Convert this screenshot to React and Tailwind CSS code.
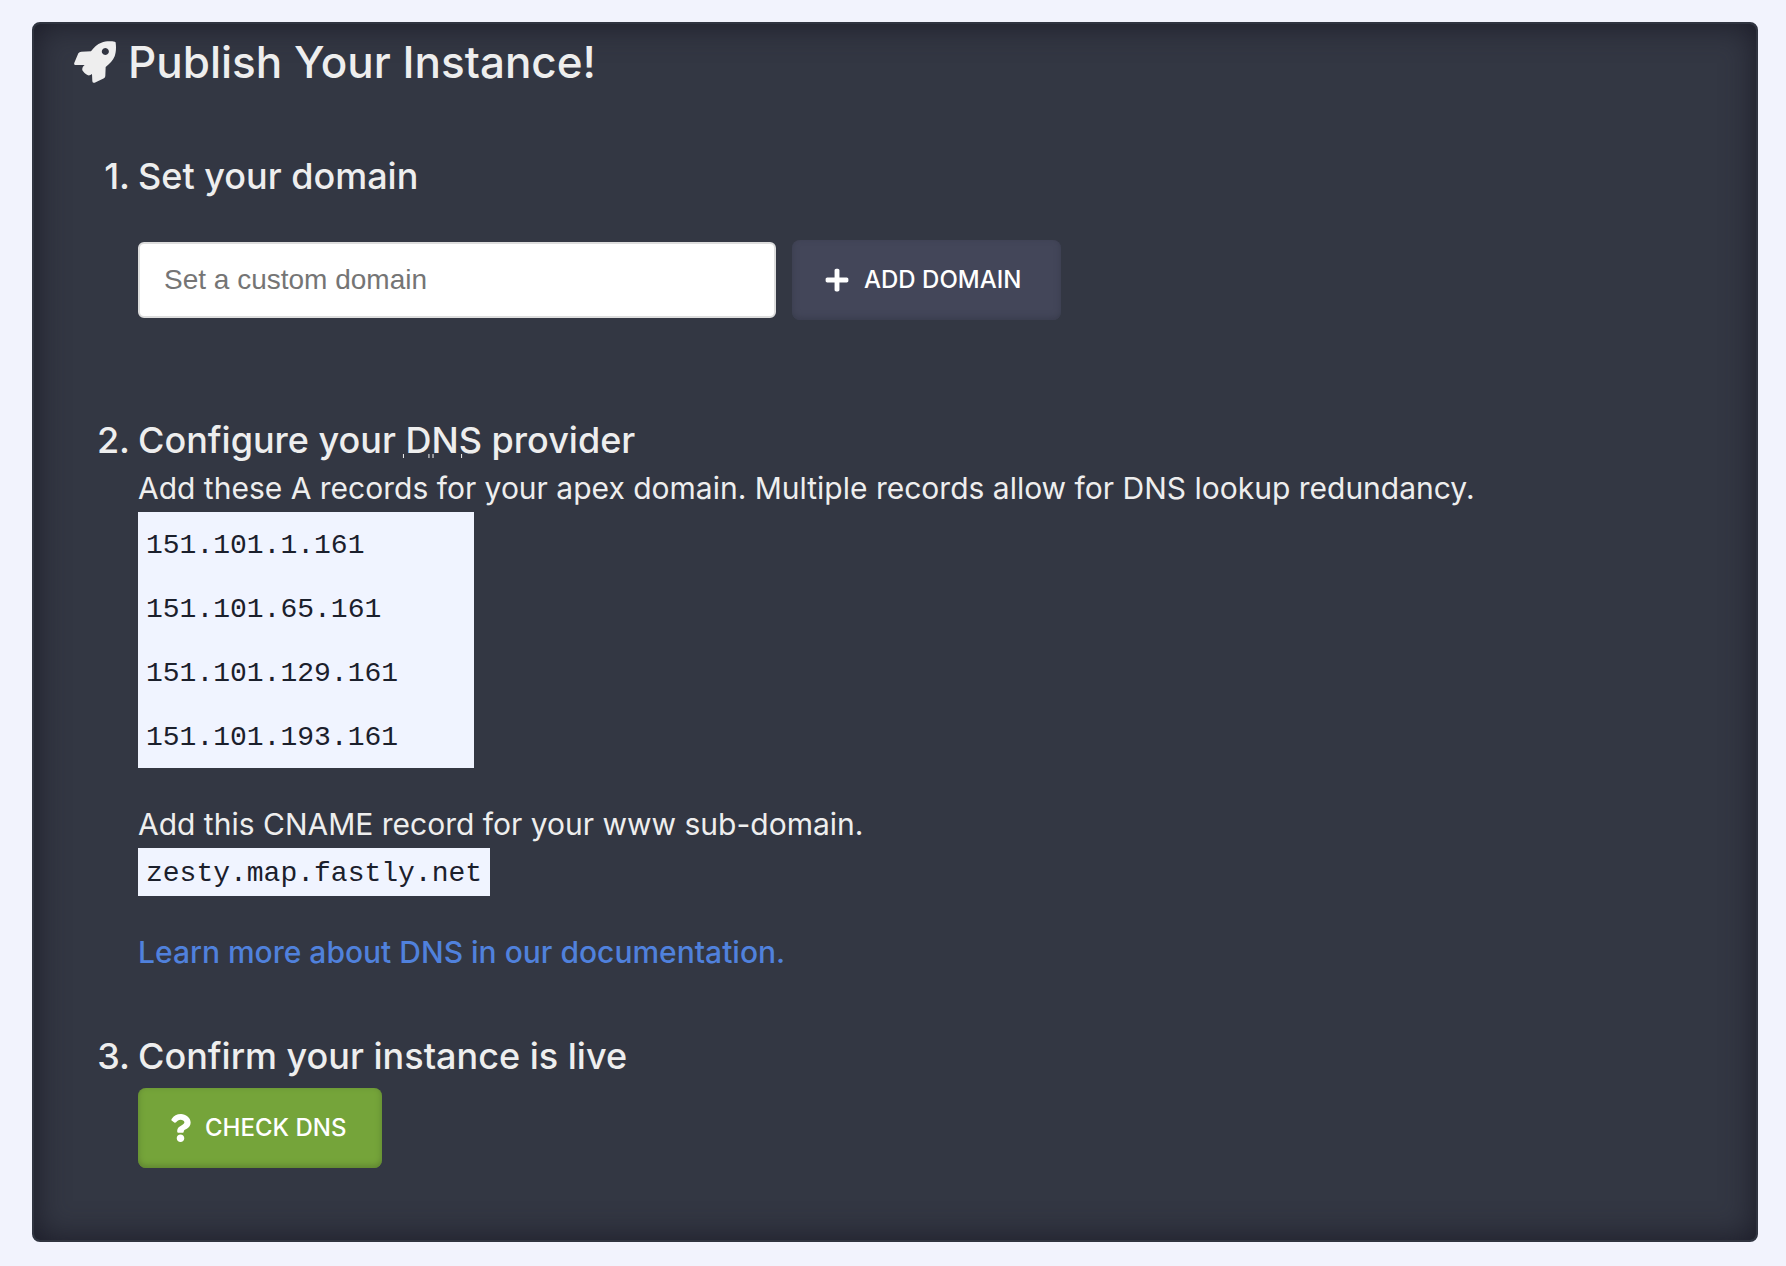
import { FaPlus, FaQuestion } from "react-icons/fa";

const aRecords = [
  "151.101.1.161",
  "151.101.65.161",
  "151.101.129.161",
  "151.101.193.161",
];

function Rocket({ className }) {
  return (
    <svg className={className} viewBox="0 0 126 126" fill="currentColor" aria-hidden="true">
      <path
        fillRule="evenodd"
        d="M122 2Q125 2 125 5C127 20 126 35 122 46C117 58 107 69 95 78L94 104Q94 109 90 112L62 125Q56 127 55 121L54 99C50 102 46 104 42 103C34 99 28 93 25 88C24 82 26 76 32 72L4 72Q-1 71 1 65L13 37Q16 32 22 32L51 31C60 19 70 9 82 5C94 0 110 0 122 2ZM94 21a10.500 10.500 0 1 0 0.010 0Z"
      />
    </svg>
  );
}

function Step({ number, title, className = "", children }) {
  return (
    <li className={`flex gap-2 ${className}`}>
      <span className="w-15 shrink-0 text-right text-[36px] leading-12 font-medium">{number}.</span>
      <div className="min-w-0 flex-1">
        <h2 className="text-[36px] leading-12 font-medium">{title}</h2>
        {children}
      </div>
    </li>
  );
}

function Action({ className, children }) {
  return (
    <button
      type="button"
      className={`flex h-20 items-center gap-[14px] rounded-lg pl-8 text-2xl font-medium whitespace-nowrap text-white uppercase ${className}`}
    >
      {children}
    </button>
  );
}

function DnsTerm() {
  return (
    <span className="relative inline-block">
      DNS
      <svg
        className="absolute bottom-0 left-0 h-3 w-full overflow-visible"
        viewBox="0 0 75 12"
        preserveAspectRatio="none"
        aria-hidden="true"
      >
        <path d="M-2.500 2v4M22.500 2v4M26.500 2v4M54.500 2v4" stroke="#eeeeee" strokeWidth="1" />
      </svg>
    </span>
  );
}

export default function App() {
  return (
    <main className="min-h-screen bg-[#f2f3fd] pt-[22px] pr-7 pb-6 pl-8 font-['Inter',sans-serif] text-[#eeeeee]">
      <section className="rounded-lg border-2 border-[#303440] bg-[#333743] px-10 pt-[10px] pb-18 shadow-[inset_0_0_32px_#1b1b27]">
        <h1 className="flex items-center gap-3 text-[44px] leading-14 font-medium">
          <Rocket className="size-[42px] shrink-0" />
          Publish Your Instance!
        </h1>

        <ol className="-ml-1 pt-[62px]">
          <Step number={1} title="Set your domain">
            <form className="flex items-center gap-4 pt-10" onSubmit={(e) => e.preventDefault()}>
              <input
                type="text"
                aria-label="Custom domain"
                placeholder="Set a custom domain"
                className="h-[76px] w-[638px] rounded-md border-2 border-[#dddddd] bg-white px-6 font-['Liberation_Sans',sans-serif] text-[28px] text-[#333333] placeholder:text-[#757575]"
              />
              <Action className="bg-[#434659] pr-10 shadow-[inset_0_-2px_6px_#393c4d]">
                <FaPlus className="size-[26px] shrink-0" aria-hidden="true" />
                Add domain
              </Action>
            </form>
          </Step>

          <Step number={2} title={<>Configure your <DnsTerm /> provider</>} className="pt-24">
            <p className="text-[30px] leading-12">
              Add these A records for your apex domain. Multiple records allow for DNS lookup redundancy.
            </p>
            <ul className="w-84 bg-[#f0f4ff] px-2 pt-1 font-['Liberation_Mono',monospace] text-[28px] text-[#1b202c]">
              {aRecords.map((ip) => (
                <li key={ip} className="leading-15 not-last:pb-1">
                  {ip}
                </li>
              ))}
            </ul>
            <p className="pt-8 text-[30px] leading-12">Add this CNAME record for your www sub-domain.</p>
            <code className="block w-fit bg-[#f0f4ff] px-2 pt-1 font-['Liberation_Mono',monospace] text-[28px] leading-11 text-[#1b202c]">
              zesty.map.fastly.net
            </code>
            <p className="pt-8 text-[30px] leading-12 font-medium text-[#5081dc]">
              <a href="#dns">Learn more about DNS in our documentation.</a>
            </p>
          </Step>

          <Step number={3} title="Confirm your instance is live" className="pt-14">
            <div className="pt-2">
              <Action className="bg-[#75a43a] pr-9 shadow-[inset_0_-2px_6px_#5c8130]">
                <FaQuestion className="h-7 w-[21px] shrink-0" aria-hidden="true" />
                Check DNS
              </Action>
            </div>
          </Step>
        </ol>
      </section>
    </main>
  );
}
